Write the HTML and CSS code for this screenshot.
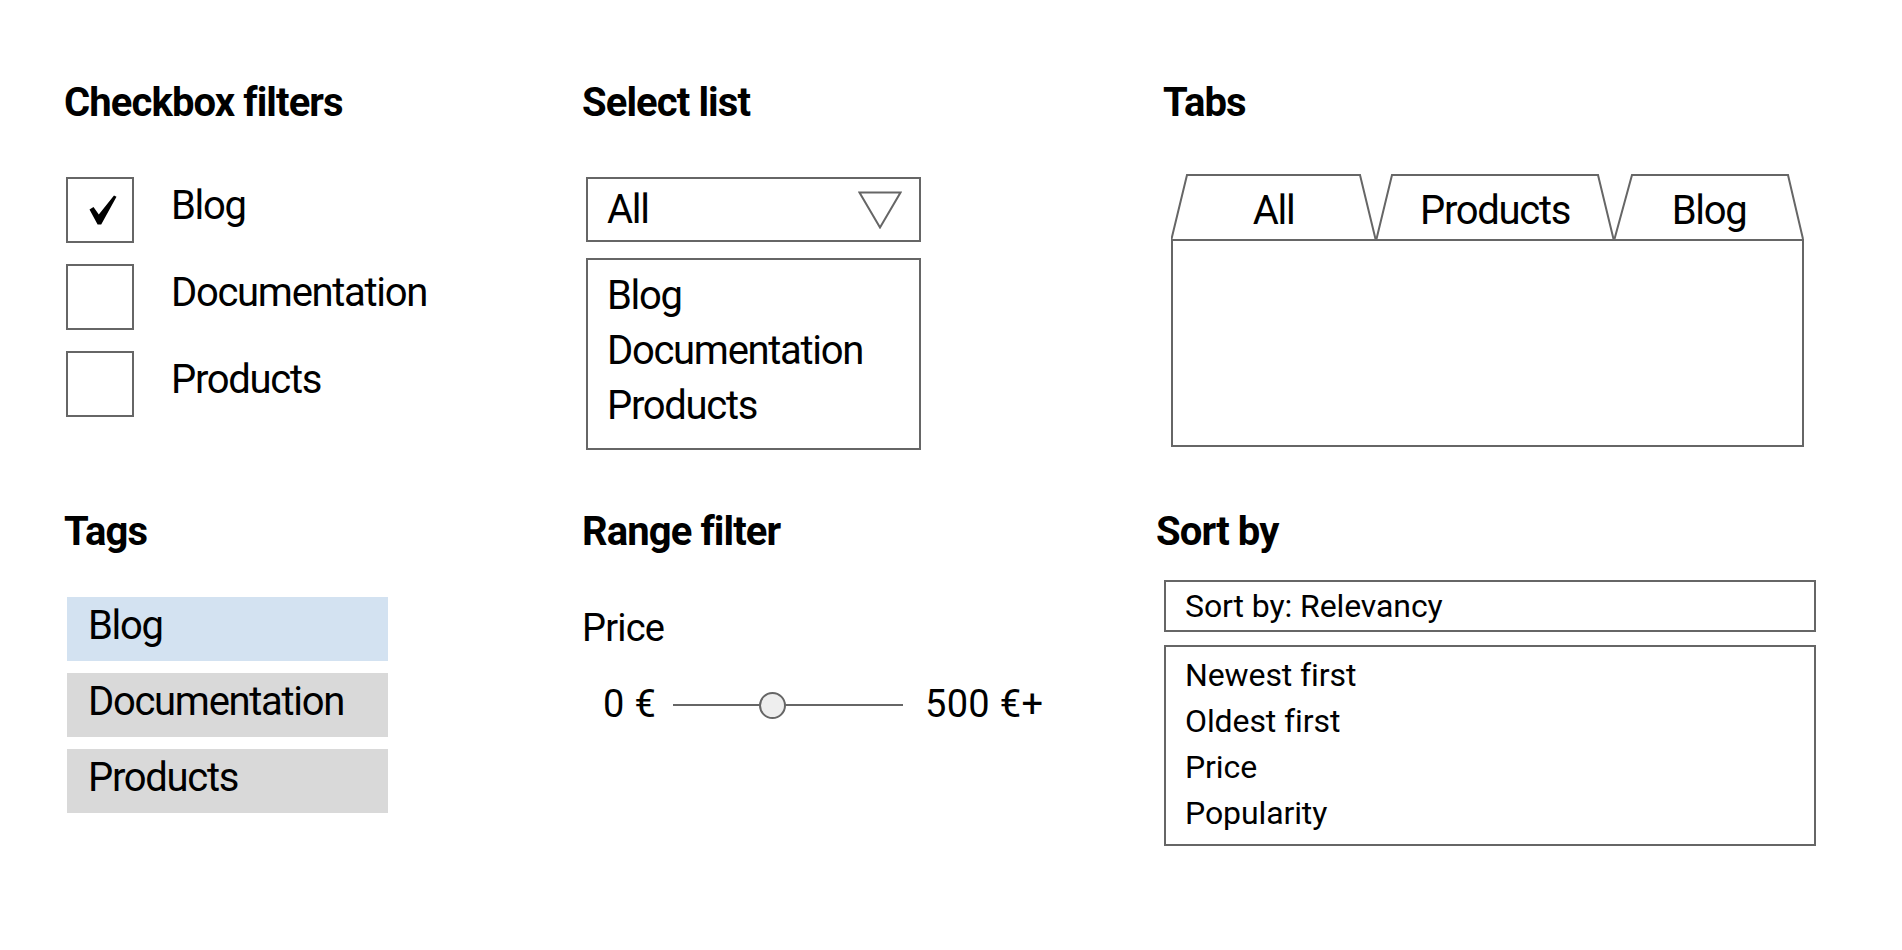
FILE: index.html
```html
<!DOCTYPE html>
<html lang="en">
<head>
<meta charset="utf-8">
<title>Search filters</title>
<link rel="stylesheet" href="styles.css">
</head>
<body>
<main class="page">
  <section class="panel">
    <h2 class="title">Checkbox filters</h2>
    <ul class="checks">
      <li class="check-row">
        <span class="box">
          <svg class="tick" width="28" height="30" viewBox="0 0 28 30"><path d="M0.5 14.5 L4.5 12 L9.8 19.5 L25 0.5 L27.5 1.8 L12.2 29.5 L8.6 29.5 Z" fill="#000"/></svg>
        </span>
        <span class="check-label">Blog</span>
      </li>
      <li class="check-row"><span class="box"></span><span class="check-label">Documentation</span></li>
      <li class="check-row"><span class="box"></span><span class="check-label">Products</span></li>
    </ul>
  </section>

  <section class="panel">
    <h2 class="title">Select list</h2>
    <div class="select">
      <span class="select-value">All</span>
      <svg class="caret" width="44" height="38" viewBox="0 0 44 38"><polygon points="1.5,1.5 42.5,1.5 22,36.5" fill="none" stroke="#666" stroke-width="2" stroke-linejoin="miter"/></svg>
    </div>
    <ul class="select-list">
      <li>Blog</li>
      <li>Documentation</li>
      <li>Products</li>
    </ul>
  </section>

  <section class="panel">
    <h2 class="title">Tabs</h2>
    <div class="tabs">
      <div class="tab-strip">
        <div class="tab tab-all">
          <svg class="tab-shape" width="205" height="65" viewBox="0 0 205 65"><polyline points="0.5,65 16,1 189,1 204.5,65" fill="#fff" stroke="#666" stroke-width="2"/></svg>
          <span class="tab-label">All</span>
        </div>
        <div class="tab tab-products">
          <svg class="tab-shape" width="238" height="65" viewBox="0 0 238 65"><polyline points="0.5,65 16,1 222,1 237.5,65" fill="#fff" stroke="#666" stroke-width="2"/></svg>
          <span class="tab-label">Products</span>
        </div>
        <div class="tab tab-blog">
          <svg class="tab-shape" width="190" height="65" viewBox="0 0 190 65"><polyline points="0.5,65 18,1 174,1 189,65" fill="#fff" stroke="#666" stroke-width="2"/></svg>
          <span class="tab-label">Blog</span>
        </div>
      </div>
      <div class="tab-body"></div>
    </div>
  </section>

  <section class="panel">
    <h2 class="title">Tags</h2>
    <ul class="tags">
      <li class="tag tag-active">Blog</li>
      <li class="tag">Documentation</li>
      <li class="tag">Products</li>
    </ul>
  </section>

  <section class="panel">
    <h2 class="title">Range filter</h2>
    <p class="range-label">Price</p>
    <div class="range">
      <span class="range-min">0 €</span>
      <span class="track"><span class="knob"></span></span>
      <span class="range-max">500 €+</span>
    </div>
  </section>

  <section class="panel">
    <h2 class="title title-sort">Sort by</h2>
    <div class="sort-select">Sort by: Relevancy</div>
    <ul class="sort-list">
      <li>Newest first</li>
      <li>Oldest first</li>
      <li>Price</li>
      <li>Popularity</li>
    </ul>
  </section>
</main>
</body>
</html>
```

FILE: styles.css
```css
* {
  box-sizing: border-box;
}

html, body {
  margin: 0;
  padding: 0;
  background: #ffffff;
}

body {
  color: #000000;
  font-family: Roboto, "Noto Sans", "Liberation Sans", sans-serif;
  font-size: 40px;
}

ul {
  list-style: none;
  margin: 0;
  padding: 0;
}

.page {
  display: grid;
  grid-template-columns: 518px 581px 1fr;
  row-gap: 58px;
  padding: 79px 0 0 64px;
}

.title {
  margin: 0;
  font-size: 40px;
  line-height: 48px;
  font-weight: 700;
  letter-spacing: -0.9px;
}

.title-sort {
  margin-left: -7px;
}

/* Checkbox filters */
.checks {
  margin-top: 50px;
  margin-left: 2px;
  display: flex;
  flex-direction: column;
  gap: 21px;
}

.check-row {
  display: flex;
  align-items: center;
  gap: 37px;
}

.box {
  width: 68px;
  height: 66px;
  border: 2px solid #666;
  display: flex;
  align-items: center;
  justify-content: center;
  flex: none;
}

.tick {
  margin-left: 5px;
  margin-top: -1px;
}

.check-label {
  font-size: 40px;
  line-height: 48px;
  letter-spacing: -1.3px;
  margin-bottom: 8px;
}

/* Select list */
.select {
  margin-top: 50px;
  margin-left: 4px;
  width: 335px;
  height: 65px;
  border: 2px solid #666;
  display: flex;
  align-items: center;
  justify-content: space-between;
  padding: 0 17px 0 19px;
}

.select-value {
  font-size: 40px;
  line-height: 48px;
  letter-spacing: -1.3px;
}

.select-list {
  margin-top: 16px;
  margin-left: 4px;
  width: 335px;
  height: 192px;
  border: 2px solid #666;
  padding: 8px 19px 0;
  font-size: 40px;
  line-height: 55px;
  letter-spacing: -1.3px;
}

/* Tabs */
.tabs {
  margin-top: 47px;
  margin-left: 8px;
  width: 633px;
}

.tab-strip {
  display: flex;
  height: 65px;
}

.tab {
  position: relative;
  height: 65px;
  padding-top: 8px;
  text-align: center;
  flex: none;
}

.tab-all { width: 205px; }
.tab-products { width: 238px; }
.tab-blog { width: 190px; }

.tab-shape {
  position: absolute;
  left: 0;
  top: 0;
}

.tab-label {
  position: relative;
  display: block;
  font-size: 40px;
  line-height: 57px;
  letter-spacing: -1.3px;
}

.tab-body {
  width: 633px;
  height: 208px;
  border: 2px solid #666;
}

/* Tags */
.tags {
  margin-top: 41px;
  margin-left: 3px;
  display: flex;
  flex-direction: column;
  gap: 12px;
}

.tag {
  width: 321px;
  height: 64px;
  display: flex;
  align-items: center;
  padding: 0 0 7px 21px;
  background: #d9d9d9;
  font-size: 40px;
  line-height: 48px;
  letter-spacing: -1.3px;
}

.tag-active {
  background: #d3e2f1;
}

/* Range filter */
.range-label {
  margin: 50px 0 0 0;
  font-size: 38px;
  line-height: 44px;
  letter-spacing: -0.8px;
}

.range {
  margin-top: 32px;
  margin-left: 21px;
  display: flex;
  align-items: center;
  height: 44px;
  font-size: 38px;
  line-height: 44px;
  letter-spacing: 0.3px;
}

.range-min {
  margin-right: 17px;
}

.track {
  position: relative;
  width: 230px;
  height: 2px;
  background: #666;
  margin-top: 2px;
}

.knob {
  position: absolute;
  left: 86px;
  top: -12px;
  width: 27px;
  height: 27px;
  border-radius: 50%;
  border: 2px solid #666;
  background: #eeeeee;
}

.range-max {
  margin-left: 22px;
}

/* Sort by */
.sort-select {
  margin-top: 24px;
  margin-left: 1px;
  width: 652px;
  height: 52px;
  border: 2px solid #666;
  display: flex;
  align-items: center;
  padding: 0 19px;
  font-size: 32px;
  line-height: 40px;
  letter-spacing: -0.1px;
}

.sort-list {
  margin-top: 13px;
  margin-left: 1px;
  width: 652px;
  height: 201px;
  border: 2px solid #666;
  padding: 5px 19px 0;
  font-size: 32px;
  line-height: 46px;
  letter-spacing: -0.1px;
}
```
